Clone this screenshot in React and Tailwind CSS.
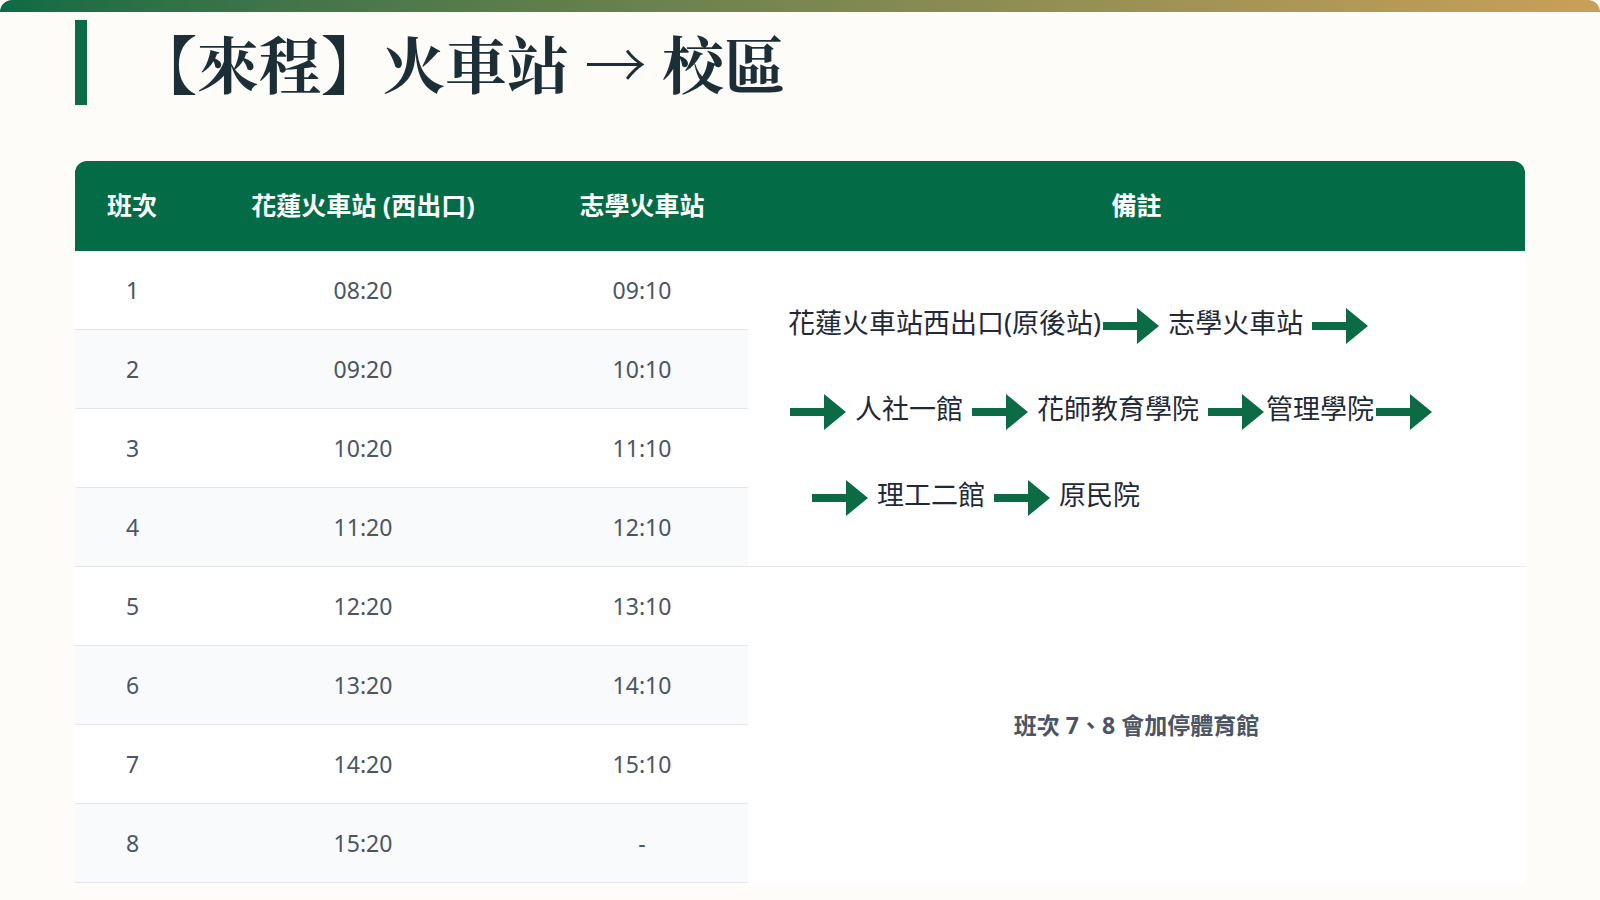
const rows=[["1","08:20","09:10"],["2","09:20","10:10"],["3","10:20","11:10"],["4","11:20","12:10"],["5","12:20","13:10"],["6","13:20","14:10"],["7","14:20","15:10"],["8","15:20","-"]];
const A=()=>(<svg width="56" height="36" viewBox="0 0 56 36" className="inline-block align-middle mx-[2px]"><path d="M0 14h34V0l22 18-22 18V22H0z" fill="#0b6b44"/></svg>);
export default function App(){
return(<div className="w-[1600px] h-[900px] overflow-hidden bg-[#fdfcf8]" style={{fontFamily:'"Noto Sans","Noto Sans CJK TC",sans-serif'}}>
<div className="h-[12px] rounded-t-[14px] bg-gradient-to-r from-[#0b6b44] to-[#c9a05a]"/>
<div className="pl-[75px] pr-[75px]">
<div className="flex items-center mt-[8px] h-[85px]">
<div className="w-[12px] h-[85px] bg-[#0b6b44]"/>
<h1 className="ml-[48px] text-[62px] font-bold text-[#1c2f36] leading-none" style={{fontFamily:'"Noto Serif CJK TC","Noto Sans CJK TC",serif'}}>【來程】火車站 → 校區</h1>
</div>
<div className="mt-[56px] w-[1450px] rounded-t-[12px] overflow-hidden">
<div className="flex h-[90px] bg-[#036b45] text-white text-[25px] font-bold items-center">
<div className="w-[115px] pl-[32px]">班次</div>
<div className="w-[346px] text-center">花蓮火車站 (西出口)</div>
<div className="w-[212px] text-center">志學火車站</div>
<div className="flex-1 text-center">備註</div>
</div>
<div className="flex">
<div className="w-[673px]">
{rows.map((r,i)=>(<div key={i} className={`flex h-[79px] items-center text-[23px] text-[#4b5563] border-b border-[#e5e7eb] ${i%2?"bg-[#f8fafc]":"bg-white"}`}>
<div className="w-[115px] text-center">{r[0]}</div><div className="w-[346px] text-center">{r[1]}</div><div className="w-[212px] text-center">{r[2]}</div></div>))}
</div>
<div className="flex-1 bg-white">
<div className="h-[316px] border-b border-[#e5e7eb] pl-[40px] pr-[8px] pt-[29px] text-[27px] text-[#1f2937] leading-[86px]">
<div>花蓮火車站西出口(原後站)<A/> 志學火車站 <A/></div>
<div><A/> 人社一館 <A/> 花師教育學院 <A/>管理學院<A/></div>
<div className="pl-[22px]"><A/> 理工二館 <A/> 原民院</div>
</div>
<div className="h-[316px] flex items-center justify-center text-[23px] font-bold text-[#4b5563]">班次 7、8 會加停體育館</div>
</div>
</div>
</div>
</div>
</div>);}
